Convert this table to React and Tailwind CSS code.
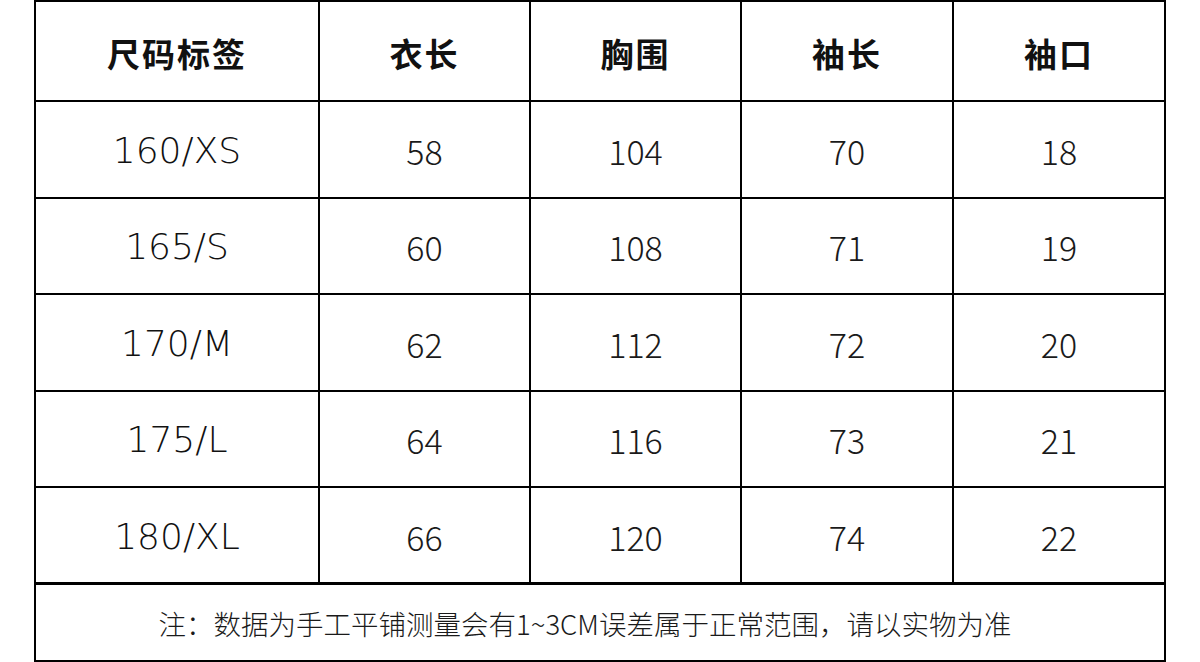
import React from "react";

const headers = ["尺码标签", "衣长", "胸围", "袖长", "袖口"];

const rows = [
  ["160/XS", "58", "104", "70", "18"],
  ["165/S", "60", "108", "71", "19"],
  ["170/M", "62", "112", "72", "20"],
  ["175/L", "64", "116", "73", "21"],
  ["180/XL", "66", "120", "74", "22"],
];

export default function App() {
  return (
    <div
      className="w-[1200px] h-[662px] bg-white pl-[34px]"
      style={{ fontFamily: '"Noto Sans CJK SC", "Noto Sans", sans-serif' }}
    >
      <div className="w-[1132px] h-[662px] border-2 border-t-0 border-black flex flex-col">
        {/* HEADER */}
        <div className="grid grid-cols-[284px_211px_211px_212px_1fr] h-[102px] border-t-2 border-b-2 border-black">
          {headers.map((h, i) => (
            <div
              key={h}
              className={`flex items-center justify-center pt-[6px] text-[33px] font-bold tracking-[2px] text-[#111] ${
                i < 4 ? "border-r-2 border-black" : ""
              }`}
            >
              {h}
            </div>
          ))}
        </div>

        {/* ROWS */}
        {rows.map((r, ri) => (
          <div
            key={r[0]}
            className={`grid grid-cols-[284px_211px_211px_212px_1fr] border-black ${
              ri === rows.length - 1 ? "h-[97px] border-b-[3px]" : "h-[96.5px] border-b-2"
            }`}
          >
            {r.map((v, i) =>
              i === 0 ? (
                <div
                  key={i}
                  className="flex items-center justify-center pt-[3px] border-r-2 border-black text-[36px] font-extralight text-[#111] font-['DejaVu_Sans',sans-serif]"
                >
                  {v}
                </div>
              ) : (
                <div
                  key={i}
                  className={`flex items-center justify-center pt-[2px] text-[34px] font-light text-[#1a1a1a] ${
                    i < 4 ? "border-r-2 border-black" : ""
                  }`}
                >
                  {v}
                </div>
              )
            )}
          </div>
        ))}

        {/* NOTE */}
        <div className="flex-1 flex items-center justify-center pr-[30px] pt-[2px] text-[27.5px] font-light text-[#1a1a1a]">
          注：数据为手工平铺测量会有1~3CM误差属于正常范围，请以实物为准
        </div>
      </div>
    </div>
  );
}
